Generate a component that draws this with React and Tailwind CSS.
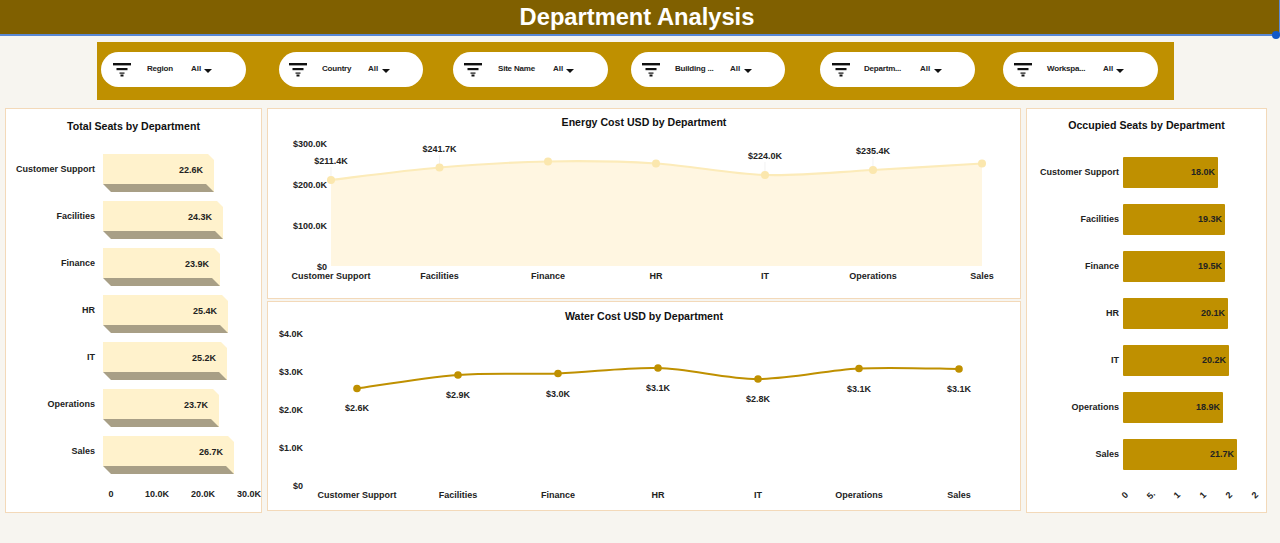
import React from "react";

const filters = [
  { label: "Region", pill: "w-[145px] ml-0 pl-[12px]", iconGap: "ml-[16px]", labelW: "w-[44px]", allW: "w-[13px]" },
  { label: "Country", pill: "w-[144px] ml-[33px] pl-[10px]", iconGap: "ml-[15px]", labelW: "w-[46px]", allW: "w-[14px]" },
  { label: "Site Name", pill: "w-[155px] ml-[30px] pl-[11px]", iconGap: "ml-[16px]", labelW: "w-[55px]", allW: "w-[13px]" },
  { label: "Building ...", pill: "w-[154px] ml-[23px] pl-[11px]", iconGap: "ml-[15px]", labelW: "w-[55px]", allW: "w-[14px]" },
  { label: "Departm...", pill: "w-[155px] ml-[35px] pl-[12px]", iconGap: "ml-[14px]", labelW: "w-[56px]", allW: "w-[14px]" },
  { label: "Workspa...", pill: "w-[155px] ml-[28px] pl-[11px]", iconGap: "ml-[15px]", labelW: "w-[56px]", allW: "w-[13px]" },
];

const totalSeats = [
  { name: "Customer Support", value: "22.6K", width: 111 },
  { name: "Facilities", value: "24.3K", width: 120 },
  { name: "Finance", value: "23.9K", width: 117 },
  { name: "HR", value: "25.4K", width: 125 },
  { name: "IT", value: "25.2K", width: 124 },
  { name: "Operations", value: "23.7K", width: 116 },
  { name: "Sales", value: "26.7K", width: 131 },
];

const occupiedSeats = [
  { name: "Customer Support", value: "18.0K", width: 95 },
  { name: "Facilities", value: "19.3K", width: 102 },
  { name: "Finance", value: "19.5K", width: 102 },
  { name: "HR", value: "20.1K", width: 105 },
  { name: "IT", value: "20.2K", width: 106 },
  { name: "Operations", value: "18.9K", width: 100 },
  { name: "Sales", value: "21.7K", width: 114 },
];

const depts = ["Customer Support", "Facilities", "Finance", "HR", "IT", "Operations", "Sales"];

const energyPts = [
  [331, 180],
  [439.5, 167.5],
  [548, 161.5],
  [656, 163.5],
  [765, 175],
  [873, 170],
  [982, 163.5],
];

const energyLabels = [
  { x: 331, y: 164, t: "$211.4K", py: 180 },
  { x: 439.5, y: 152, t: "$241.7K", py: 167.5 },
  { x: 765, y: 159, t: "$224.0K", py: 175 },
  { x: 873, y: 154, t: "$235.4K", py: 170 },
];

const waterPts = [
  [357, 388.5],
  [458, 375],
  [558, 373.5],
  [658, 368],
  [758, 379],
  [859, 368.5],
  [959, 369],
];

const waterLabels = ["$2.6K", "$2.9K", "$3.0K", "$3.1K", "$2.8K", "$3.1K", "$3.1K"];
const waterLabelY = [411, 398, 397, 391, 402, 392, 392];

// catmull-rom through the points, close enough to excel's smoothed line
const smooth = (pts) => {
  let d = `M${pts[0][0]} ${pts[0][1]}`;
  for (let i = 0; i < pts.length - 1; i++) {
    const p0 = pts[i - 1] || pts[i];
    const p1 = pts[i];
    const p2 = pts[i + 1];
    const p3 = pts[i + 2] || p2;
    const c1x = p1[0] + (p2[0] - p0[0]) / 6;
    const c1y = p1[1] + (p2[1] - p0[1]) / 6;
    const c2x = p2[0] - (p3[0] - p1[0]) / 6;
    const c2y = p2[1] - (p3[1] - p1[1]) / 6;
    d += ` C${c1x} ${c1y} ${c2x} ${c2y} ${p2[0]} ${p2[1]}`;
  }
  return d;
};

const FilterIcon = () => (
  <svg width="18" height="14" viewBox="0 0 18 14" className="shrink-0">
    <rect x="0" y="0" width="18" height="2.4" fill="#111" />
    <rect x="3.5" y="5" width="11" height="2.2" fill="#111" />
    <rect x="6.5" y="9.5" width="5" height="1.2" fill="#111" />
    <rect x="7.5" y="11.5" width="3" height="2" fill="#111" />
  </svg>
);

const Slicer = ({ label, pill, iconGap, labelW, allW }) => (
  <div className={`flex h-[35px] items-center rounded-[18px] bg-white ${pill}`}>
    <FilterIcon />
    <span className={`mb-[1px] shrink-0 whitespace-nowrap text-[8px] font-bold tracking-[-0.2px] text-[#222] ${iconGap} ${labelW}`}>{label}</span>
    <span className={`mb-[1px] shrink-0 text-[8px] font-bold text-[#222] ${allW}`}>All</span>
    <span className="mt-[3px] h-0 w-0 border-x-[4px] border-t-[4px] border-x-transparent border-t-[#111]" />
  </div>
);

const Bar3d = ({ value, width }) => (
  <div className="relative h-[38px]" style={{ width }}>
    <svg width={width} height="38" className="block">
      <polygon points={`0,0 ${width - 6},0 ${width},6 ${width},38 0,30`} fill="#fff2cc" />
      <polygon points={`0,30 ${width - 8},30 ${width},38 8,38`} fill="#a89f86" />
    </svg>
    <span className="absolute right-[11px] top-[10px] text-[9px] font-bold text-[#222]">{value}</span>
  </div>
);

const Panel = ({ className, children }) => (
  <div className={`border border-[#f3d9b9] bg-white ${className}`}>{children}</div>
);

export default function App() {
  return (
    <div className="h-[543px] w-[1280px] overflow-hidden bg-[#f7f5f0] font-['Liberation_Sans',Arial,sans-serif]">
      <div className="relative flex h-[36px] items-center justify-center border-b-2 border-r border-[#5a88d4] bg-[#806000] pr-[5px] pt-[1px]">
        <h1 className="text-[23.7px] font-bold text-white">Department Analysis</h1>
        <span className="absolute -bottom-[5px] -right-[1px] h-[8px] w-[8px] rounded-full bg-[#1259c9]" />
      </div>

      <div className="ml-[97px] mt-[6px] flex h-[58px] w-[1077px] items-start bg-[#bf9000] pl-[4px] pt-[10px]">
        {filters.map((f) => (
          <Slicer key={f.label} {...f} />
        ))}
      </div>

      <div className="ml-[5px] mt-[8px] flex items-start gap-[5px]">
        <Panel className="h-[405px] w-[257px] shrink-0">
          <h2 className="mt-[10px] text-center text-[10.6px] font-bold leading-[14px] text-[#111]">Total Seats by Department</h2>
          <div className="mt-[21px] flex flex-col gap-[9px]">
            {totalSeats.map((r) => (
              <div key={r.name} className="flex items-start">
                <span className="mt-[8.5px] w-[89px] shrink-0 text-right text-[9px] font-bold leading-[12px] text-[#222]">{r.name}</span>
                <div className="ml-[8px]">
                  <Bar3d value={r.value} width={r.width} />
                </div>
              </div>
            ))}
          </div>
          <div className="ml-[90px] mt-[14px] flex w-[168px] justify-between text-[9px] font-bold leading-[12px] text-[#222]">
            <span className="w-[30px] text-center">0</span>
            <span className="w-[30px] text-center">10.0K</span>
            <span className="w-[30px] text-center">20.0K</span>
            <span className="w-[30px] text-center">30.0K</span>
          </div>
        </Panel>

        <div className="flex w-[754px] shrink-0 flex-col gap-[2px]">
          <Panel className="h-[191px]">
            <svg width="752" height="189" viewBox="268 109 752 189" className="block font-bold">
              <text x="644" y="126" textAnchor="middle" fontSize="10.6" fill="#111">Energy Cost USD by Department</text>
              {["$300.0K", "$200.0K", "$100.0K", "$0"].map((t, i) => (
                <text key={t} x="327" y={147 + i * 41} textAnchor="end" fontSize="9" fill="#222">{t}</text>
              ))}
              <path d={`${smooth(energyPts)} L982 266 L331 266 Z`} fill="#fff6e1" />
              <path d={smooth(energyPts)} fill="none" stroke="#fcebb9" strokeWidth="2.2" />
              {energyLabels.map((l) => (
                <line key={l.t} x1={l.x} y1={l.y + 3} x2={l.x} y2={l.py} stroke="#ececec" strokeWidth="0.7" />
              ))}
              {energyPts.map(([x, y]) => (
                <circle key={x} cx={x} cy={y} r="4" fill="#fbe7ae" />
              ))}
              {energyLabels.map((l) => (
                <text key={l.t} x={l.x} y={l.y} textAnchor="middle" fontSize="9" fill="#222">{l.t}</text>
              ))}
              {depts.map((d, i) => (
                <text key={d} x={energyPts[i][0]} y="279" textAnchor="middle" fontSize="9" fill="#222">{d}</text>
              ))}
            </svg>
          </Panel>
          <Panel className="h-[210px]">
            <svg width="752" height="208" viewBox="268 302 752 208" className="block font-bold">
              <text x="644" y="320" textAnchor="middle" fontSize="10.6" fill="#111">Water Cost USD by Department</text>
              {["$4.0K", "$3.0K", "$2.0K", "$1.0K", "$0"].map((t, i) => (
                <text key={t} x="303" y={337 + i * 38} textAnchor="end" fontSize="9" fill="#222">{t}</text>
              ))}
              <path d={smooth(waterPts)} fill="none" stroke="#bf9000" strokeWidth="2" />
              {waterPts.map(([x, y], i) => (
                <g key={x}>
                  <circle cx={x} cy={y} r="3.8" fill="#bf9000" />
                  <text x={x} y={waterLabelY[i]} textAnchor="middle" fontSize="9" fill="#222">{waterLabels[i]}</text>
                </g>
              ))}
              {depts.map((d, i) => (
                <text key={d} x={waterPts[i][0]} y="498" textAnchor="middle" fontSize="9" fill="#222">{d}</text>
              ))}
            </svg>
          </Panel>
        </div>

        <Panel className="h-[405px] w-[241px] shrink-0">
          <h2 className="mt-[9px] text-center text-[10.6px] font-bold leading-[14px] text-[#111]">Occupied Seats by Department</h2>
          <div className="mt-[25px] flex flex-col gap-[16px]">
            {occupiedSeats.map((r) => (
              <div key={r.name} className="flex h-[31px] items-center">
                <span className="w-[92px] shrink-0 text-right text-[9px] font-bold text-[#222]">{r.name}</span>
                <div
                  className="ml-[4px] flex h-[31px] items-center justify-end rounded-[1px] bg-[#bf9000] pr-[3px] text-[9px] font-bold text-[#222]"
                  style={{ width: r.width }}
                >
                  {r.value}
                </div>
              </div>
            ))}
          </div>
          <div className="ml-[93px] mt-[19px] flex w-[140px] justify-between text-[9px] font-bold leading-[12px] text-[#222]">
            {["0", "5.", "1", "1", "2", "2"].map((t, i) => (
              <span key={i} className="w-[10px] -rotate-45 text-center">{t}</span>
            ))}
          </div>
        </Panel>
      </div>
    </div>
  );
}
